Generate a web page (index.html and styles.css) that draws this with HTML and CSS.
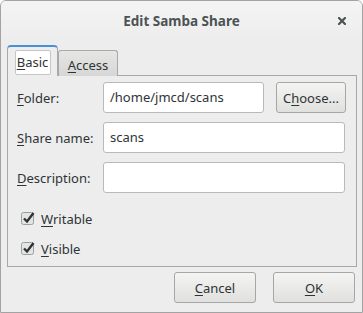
FILE: index.html
```html
<!DOCTYPE html>
<html>
<head>
    <meta charset="UTF-8">
    <title>Edit Samba Share</title>
    <link rel="stylesheet" href="styles.css">
</head>
<body>
<div class="dialog">
    <div class="titlebar">
        <span class="title">Edit Samba Share</span>
        <span class="close">
            <svg width="8" height="8" viewBox="0 0 8 8"><path d="M1 1L7 7M7 1L1 7" stroke="#4c5355" stroke-width="2.2" stroke-linecap="square"/></svg>
        </span>
    </div>
    <div class="content">
        <div class="tabs">
            <div class="tab active"><span class="focus"><u>B</u>asic</span></div>
            <div class="tab"><u>A</u>ccess</div>
        </div>
        <div class="panel">
            <div class="form">
                <label class="label"><u>F</u>older:</label>
                <div class="entry">/home/jmcd/scans</div>
                <div class="btn choose">C<u>h</u>oose...</div>

                <label class="label"><u>S</u>hare name:</label>
                <div class="entry wide">scans</div>

                <label class="label"><u>D</u>escription:</label>
                <div class="entry wide"></div>
            </div>
            <div class="checks">
                <div class="check">
                    <svg class="box" width="16" height="16" viewBox="0 0 16 16"><rect x="0.5" y="2.5" width="12" height="12" rx="2" fill="#e4e4e2" stroke="#9d9f9d"/><path d="M3 8.5L6 11.5L12.5 3" fill="none" stroke="#2e3436" stroke-width="2.4"/></svg>
                    <span><u>W</u>ritable</span>
                </div>
                <div class="check">
                    <svg class="box" width="16" height="16" viewBox="0 0 16 16"><rect x="0.5" y="2.5" width="12" height="12" rx="2" fill="#e4e4e2" stroke="#9d9f9d"/><path d="M3 8.5L6 11.5L12.5 3" fill="none" stroke="#2e3436" stroke-width="2.4"/></svg>
                    <span><u>V</u>isible</span>
                </div>
            </div>
        </div>
        <div class="actions">
            <div class="btn action"><u>C</u>ancel</div>
            <div class="btn action"><u>O</u>K</div>
        </div>
    </div>
</div>
</body>
</html>
```

FILE: styles.css
```css
* {
    margin: 0;
    padding: 0;
    box-sizing: border-box;
}

body {
    background: #ffffff;
    font-family: "Noto Sans", "Liberation Sans", sans-serif;
    font-size: 13px;
    color: #2e3436;
}

u {
    text-decoration: underline;
    text-underline-offset: 2px;
}

.dialog {
    width: 363px;
    height: 313px;
    border: 1px solid #a3a3a3;
    border-radius: 6px 6px 0 0;
    background: #ededed;
    display: flex;
    flex-direction: column;
    overflow: hidden;
}

.titlebar {
    position: relative;
    height: 39px;
    display: flex;
    align-items: center;
    justify-content: center;
    background: linear-gradient(#f4f4f4, #ededed);
}

.title {
    font-weight: bold;
    font-size: 13.5px;
    color: #4c5355;
    line-height: 16px;
}

.close {
    position: absolute;
    right: 16px;
    top: 16px;
    width: 8px;
    height: 8px;
    display: block;
}

.close svg {
    display: block;
}

.content {
    flex: 1;
    display: flex;
    flex-direction: column;
    padding: 6px 5px 7px 6px;
}

.tabs {
    display: flex;
    align-items: flex-end;
    height: 30px;
    position: relative;
    z-index: 1;
    margin-bottom: -1px;
}

.tab {
    height: 26px;
    width: 60px;
    border: 1px solid #a8a8a8;
    border-bottom: none;
    border-radius: 3px 3px 0 0;
    background: linear-gradient(#e6e6e5, #d6d6d5);
    display: flex;
    align-items: center;
    justify-content: center;
    line-height: 16px;
    padding-top: 2px;
}

.tab.active {
    width: 51px;
    height: 31px;
    background: #ededed;
    border-top: 2px solid #4a90d9;
    border-radius: 4px 4px 0 0;
    padding-top: 0;
}

.focus {
    display: flex;
    align-items: center;
    justify-content: center;
    width: 36px;
    height: 25px;
    background: #ffffff;
    border: 1px solid #c6c6c6;
    border-radius: 2px;
    margin-top: 1px;
}

.panel {
    height: 192px;
    border: 1px solid #a8a8a8;
    padding: 6px 11px 0 9px;
}

.form {
    display: grid;
    grid-template-columns: 86px 1fr auto;
    row-gap: 9px;
    align-items: center;
}

.label {
    line-height: 16px;
}

.entry {
    height: 31px;
    background: #ffffff;
    border: 1px solid #b9b9b7;
    border-radius: 3px;
    padding: 0 6px;
    line-height: 29px;
}

.entry.wide {
    grid-column: 2 / 4;
}

.btn {
    height: 31px;
    border: 1px solid #a6a6a6;
    border-radius: 3px;
    background: linear-gradient(#f4f4f3, #e0e0de);
    display: flex;
    align-items: center;
    justify-content: center;
    line-height: 16px;
}

.choose {
    width: 70px;
    margin-left: 12px;
    margin-right: -1px;
}

.checks {
    margin-top: 11px;
    padding-left: 4px;
}

.check {
    height: 30px;
    display: flex;
    align-items: center;
    gap: 4px;
    line-height: 16px;
}

.check .box {
    display: block;
    margin-top: -3px;
}

.actions {
    display: flex;
    justify-content: flex-end;
    gap: 17px;
    margin-top: 5px;
    padding-right: 2px;
}

.action {
    width: 82px;
}
```
